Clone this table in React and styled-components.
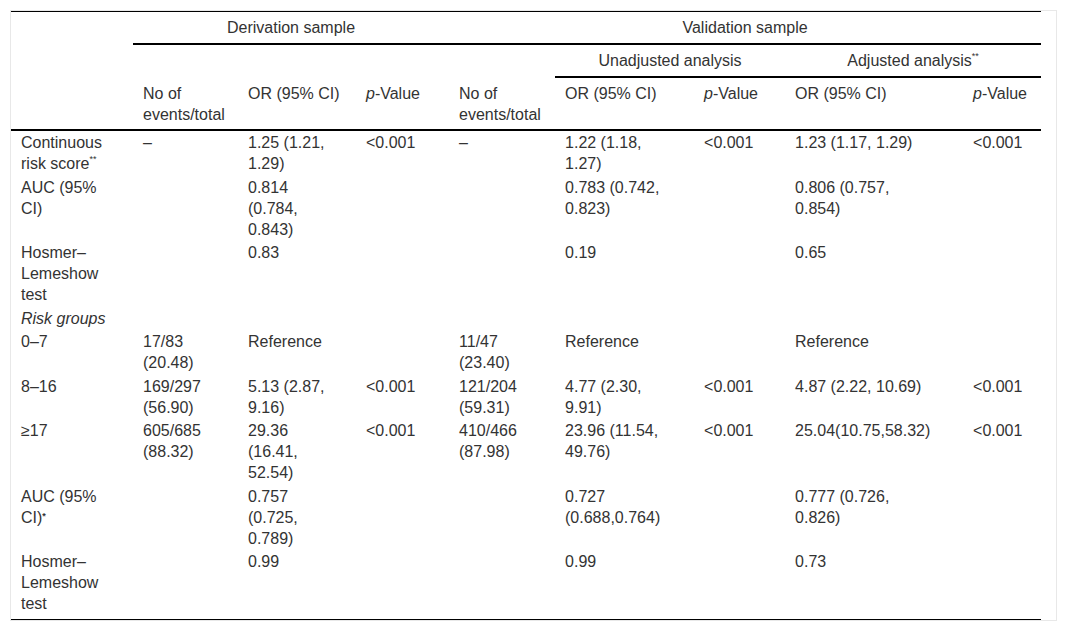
import React from 'react';
import styled, { createGlobalStyle } from 'styled-components';

const Global = createGlobalStyle`
  html, body { margin: 0; padding: 0; background: #fff; }
  body { font-family: "Liberation Sans", Arial, Helvetica, sans-serif; color: #333; }
`;

const Page = styled.div`
  padding: 10px;
`;

const Frame = styled.div`
  width: 1045px;
  border: 1px solid #e8e8e8;
`;

const Table = styled.table`
  width: 1030px;
  table-layout: fixed;
  border-collapse: separate;
  border-spacing: 0;
  border-top: 1px solid #000;
  border-bottom: 1px solid #000;
  font-size: 16px;
  line-height: 21px;
`;

const HeadCell = styled.th`
  font-weight: normal;
  text-align: ${p => p.$align || 'left'};
  vertical-align: top;
  padding: 5px ${p => (p.$pr != null ? `${p.$pr}px` : '10px')} ${p => (p.$tight ? '4px' : '5px')} 10px;
  border-bottom: ${p => (p.$line ? '2px solid #000' : '0')};
`;

const Cell = styled.td`
  vertical-align: top;
  padding: 1px ${p => p.$pr}px ${p => (p.$last ? '4.5px' : '1.5px')} 10px;
  font-style: ${p => (p.$italic ? 'italic' : 'normal')};
`;

const Sup = styled.sup`
  font-size: 9px;
  line-height: 0;
  vertical-align: ${p => (p.$low ? '4px' : '7px')};
  font-weight: ${p => (p.$low ? 'bold' : 'normal')};
`;

const Ital = styled.i`
  font-style: italic;
`;

const COLS = [
  { w: 122, pr: 20 },
  { w: 105, pr: 10 },
  { w: 118, pr: 15 },
  { w: 93, pr: 23 },
  { w: 106, pr: 11 },
  { w: 139, pr: 24 },
  { w: 91, pr: 21 },
  { w: 178, pr: 29 },
  { w: 78, pr: 8 },
];

const PVal = () => (
  <>
    <Ital>p</Ital>-Value
  </>
);

const colHeads = [
  'No of events/total',
  'OR (95% CI)',
  <PVal />,
  'No of events/total',
  'OR (95% CI)',
  <PVal />,
  'OR (95% CI)',
  <PVal />,
];

const rows = [
  [
    <>Continuous risk score<Sup>**</Sup></>,
    '–', '1.25 (1.21, 1.29)', '<0.001', '–', '1.22 (1.18, 1.27)', '<0.001', '1.23 (1.17, 1.29)', '<0.001',
  ],
  ['AUC (95% CI)', '', '0.814 (0.784, 0.843)', '', '', '0.783 (0.742, 0.823)', '', '0.806 (0.757, 0.854)', ''],
  ['Hosmer–Lemeshow test', '', '0.83', '', '', '0.19', '', '0.65', ''],
  { italic: true, cells: ['Risk groups', '', '', '', '', '', '', '', ''] },
  ['0–7', '17/83 (20.48)', 'Reference', '', '11/47 (23.40)', 'Reference', '', 'Reference', ''],
  ['8–16', '169/297 (56.90)', '5.13 (2.87, 9.16)', '<0.001', '121/204 (59.31)', '4.77 (2.30, 9.91)', '<0.001', '4.87 (2.22, 10.69)', '<0.001'],
  ['≥17', '605/685 (88.32)', '29.36 (16.41, 52.54)', '<0.001', '410/466 (87.98)', '23.96 (11.54, 49.76)', '<0.001', '25.04(10.75,58.32)', '<0.001'],
  [
    <>AUC (95% CI)<Sup $low>*</Sup></>,
    '', '0.757 (0.725, 0.789)', '', '', '0.727 (0.688,0.764)', '', '0.777 (0.726, 0.826)', '',
  ],
  ['Hosmer–Lemeshow test', '', '0.99', '', '', '0.99', '', '0.73', ''],
];

export default function App() {
  return (
    <Page>
      <Global />
      <Frame>
        <Table>
          <colgroup>
            {COLS.map((c, i) => (
              <col key={i} style={{ width: c.w }} />
            ))}
          </colgroup>
          <thead>
            <tr>
              <HeadCell rowSpan={3} $line />
              <HeadCell colSpan={3} $align="center" $line>Derivation sample</HeadCell>
              <HeadCell colSpan={5} $align="center" $line>Validation sample</HeadCell>
            </tr>
            <tr>
              <HeadCell colSpan={4} />
              <HeadCell colSpan={2} $align="center" $line>Unadjusted analysis</HeadCell>
              <HeadCell colSpan={2} $align="center" $line>
                Adjusted analysis<Sup>**</Sup>
              </HeadCell>
            </tr>
            <tr>
              {colHeads.map((h, i) => (
                <HeadCell key={i} $line $tight $pr={COLS[i + 1].pr}>
                  {h}
                </HeadCell>
              ))}
            </tr>
          </thead>
          <tbody>
            {rows.map((r, ri) => {
              const cells = Array.isArray(r) ? r : r.cells;
              const italic = !Array.isArray(r) && r.italic;
              const last = ri === rows.length - 1;
              return (
                <tr key={ri}>
                  {cells.map((c, ci) => (
                    <Cell key={ci} $pr={COLS[ci].pr} $italic={italic && ci === 0} $last={last}>
                      {c}
                    </Cell>
                  ))}
                </tr>
              );
            })}
          </tbody>
        </Table>
      </Frame>
    </Page>
  );
}
